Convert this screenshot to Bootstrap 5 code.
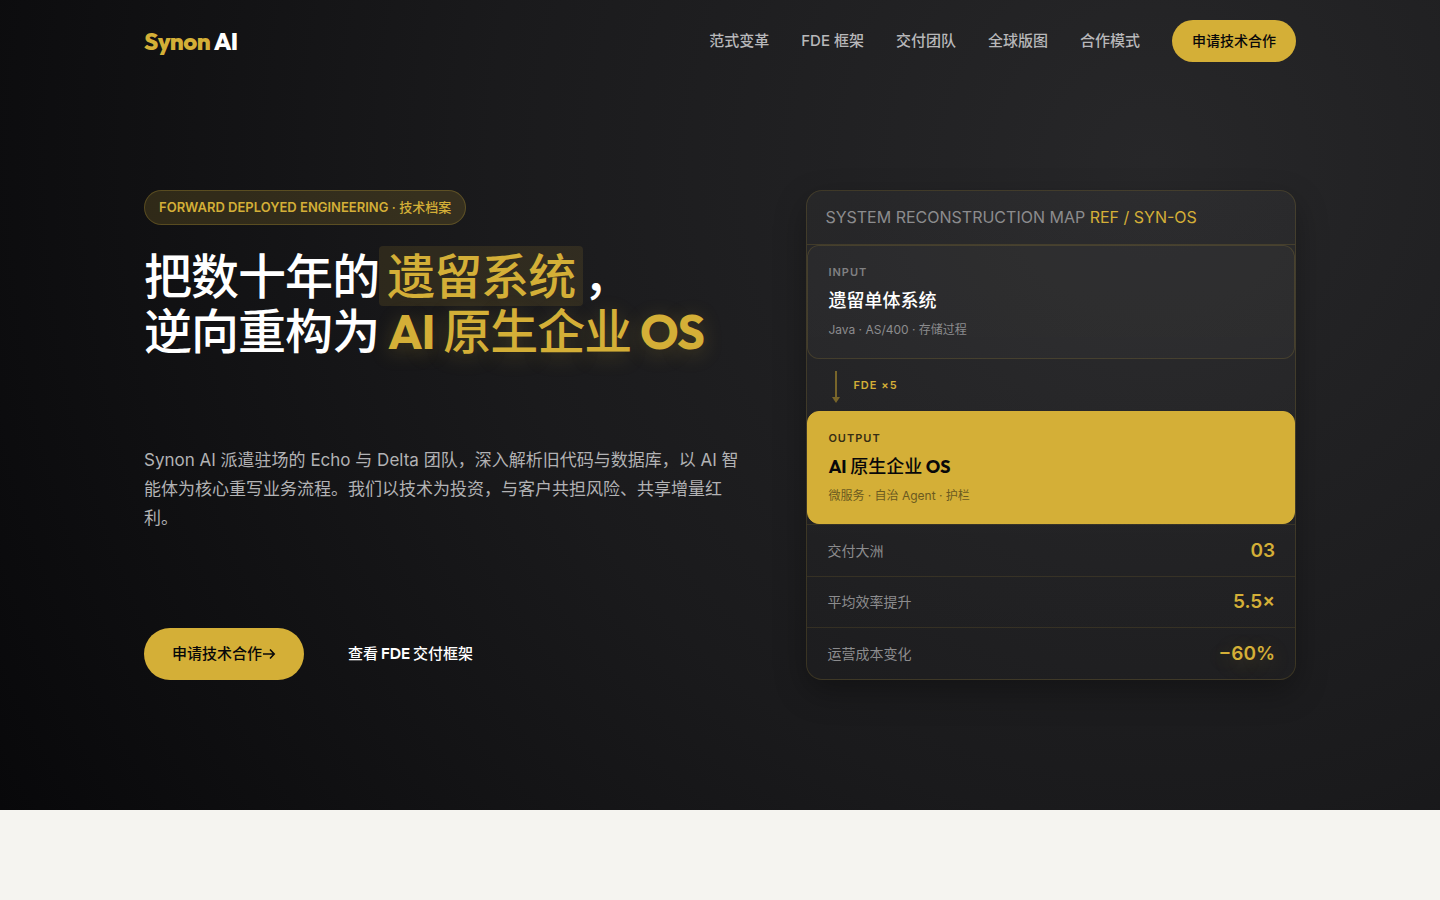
<!DOCTYPE html>
<html lang="zh-CN">
<head>
<meta charset="utf-8">
<meta name="viewport" content="width=device-width, initial-scale=1">
<title>Synon AI</title>
<link rel="stylesheet" href="https://cdn.jsdelivr.net/npm/bootstrap@5.3.0/dist/css/bootstrap.min.css">
<style>
:root {
  --gold: #d4af37;
  --gold-line: rgba(212, 175, 55, .16);
  --display: Outfit, "Noto Sans CJK SC", sans-serif;
}
body { background: #f5f4f0; font-family: Inter, "Noto Sans CJK SC", sans-serif; color: #fff; }
.text-gold { color: var(--gold); }
.page-hero {
  min-height: 90vh;
  background: radial-gradient(circle at 80% 20%, #272729 0%, #1a1a1c 50%, #08080a 100%);
}
.wrap { width: 100%; max-width: 1200px; margin: 0 auto; padding: 0 24px; }
.brand { font: 800 24px/30px var(--display); letter-spacing: -0.02em; color: #fff; text-decoration: none; }
.menu-link { color: #b8b8ba; font-size: 15px; font-weight: 500; line-height: 24px; text-decoration: none; }
.btn-gold { --bs-btn-bg: var(--gold); --bs-btn-color: #08080a; --bs-btn-hover-bg: #e0bd4a; --bs-btn-border-width: 0px; font-family: var(--display); font-weight: 500; }
.btn-apply { font-size: 14px; line-height: 22px; padding: 10px 20px; }
.btn-main { font-size: 15px; line-height: 24px; padding: 14px 28px; }
.btn-ghost { --bs-btn-color: #fff; --bs-btn-hover-color: var(--gold); --bs-btn-border-width: 0px; font: 500 15px/24px var(--display); padding: 14px 28px; }
.btn-ghost b { font-weight: 600; }
.hero-grid { display: grid; grid-template-columns: 1.1fr .9fr; gap: 64px; padding-bottom: 18px; }
.tag-pill { background: rgba(212, 175, 55, .16); border: 1px solid rgba(212, 175, 55, .25); color: var(--gold); font-size: 13px; font-weight: 500; line-height: 21px; padding: 6px 14px; }
.tag-pill b { font-weight: 600; }
.headline { font: 500 48px/55px var(--display); letter-spacing: -0.02em; margin: 24px 0 0; }
.headline b { font-weight: 700; }
.legacy { background: rgba(212, 175, 55, .12); color: var(--gold); border-radius: 4px; padding: 0 8px; }
.glow { color: var(--gold); text-shadow: 0 4px 20px rgba(212, 175, 55, .25); }
.intro { font-size: 17px; line-height: 29px; color: #b2b2b4; padding-bottom: 8px; }
.map { background: linear-gradient(rgba(255, 255, 255, .03), rgba(255, 255, 255, .01)); border: 1px solid var(--gold-line); border-radius: 16px; box-shadow: 0 12px 32px rgba(0, 0, 0, .3); overflow: hidden; }
.map-head { color: #8c8c8e; font-size: 16px; line-height: 26px; padding: 13px 18px 14px; border-bottom: 1px solid var(--gold-line); }
.node { background: rgba(255, 255, 255, .02); border: 1px solid var(--gold-line); border-radius: 12px; padding: 17px 20px 18px; }
.node-label { font-size: 11px; font-weight: 600; line-height: 18px; letter-spacing: 1px; color: #808082; }
.node-title { font: 500 18px/28px var(--display); margin: 6px 0 5px; }
.node-title b { font-weight: 700; }
.node-note { font-size: 12px; line-height: 20px; color: #8c8c8e; }
.node-out { background: var(--gold); border-color: var(--gold); color: #08080a; padding-bottom: 17px; }
.node-out .node-label { color: #352d14; }
.node-out .node-note { color: #6b5a20; }
.step { height: 52px; padding-left: 24px; gap: 12px; color: var(--gold); font-size: 11px; font-weight: 600; letter-spacing: 1px; }
.stat { line-height: 31px; padding: 10px 20px; border-top: 1px solid rgba(212, 175, 55, .12); }
.stat:nth-child(2) { line-height: 30px; }
.stat dt { font-size: 14px; font-weight: 400; color: #8c8c8e; }
.stat dd { font-size: 19px; font-weight: 600; color: var(--gold); }
@media (max-width: 991px) { .hero-grid { grid-template-columns: 1fr; } }
</style>
</head>
<body>
<header class="page-hero d-flex flex-column">
  <nav class="wrap d-flex align-items-center justify-content-between flex-wrap pt-1" aria-label="主导航">
    <a class="brand" href="#"><span class="text-gold">Synon</span> AI</a>
    <div class="d-flex align-items-center flex-wrap py-3 column-gap-4 menu">
      <a class="menu-link" href="#paradigm">范式变革</a>
      <a class="menu-link ms-2" href="#fde">FDE 框架</a>
      <a class="menu-link ms-2" href="#team">交付团队</a>
      <a class="menu-link ms-2" href="#global">全球版图</a>
      <a class="menu-link ms-2" href="#model">合作模式</a>
      <button class="btn btn-gold btn-apply rounded-pill ms-2" type="button">申请技术合作</button>
    </div>
  </nav>
  <main class="wrap flex-grow-1 d-flex flex-column justify-content-center">
    <div class="hero-grid">
      <section class="d-flex flex-column justify-content-between">
        <div>
          <div class="tag-pill rounded-pill d-inline-block"><b>FORWARD DEPLOYED ENGINEERING</b> · 技术档案</div>
          <h1 class="headline">把数十年的<span class="legacy">遗留系统</span>，<br>逆向重构为 <span class="glow"><b>AI</b> 原生企业 <b>OS</b></span></h1>
        </div>
        <p class="intro mb-0">Synon AI 派遣驻场的 Echo 与 Delta 团队，深入解析旧代码与数据库，以 AI 智能体为核心重写业务流程。我们以技术为投资，与客户共担风险、共享增量红利。</p>
        <div class="d-flex gap-3">
          <button class="btn btn-gold btn-main rounded-pill d-flex align-items-center" type="button">申请技术合作<svg width="14" height="12" viewBox="0 0 14 12" fill="none" stroke="currentColor" stroke-width="1.6" aria-hidden="true"><path d="M1 6h11M8 1.5 12.2 6 8 10.5"/></svg></button>
          <button class="btn btn-ghost" type="button">查看 <b>FDE</b> 交付框架</button>
        </div>
      </section>
      <aside class="map">
        <div class="map-head">SYSTEM RECONSTRUCTION MAP <span class="text-gold">REF / SYN-OS</span></div>
        <div class="node">
          <div class="node-label">INPUT</div>
          <h2 class="node-title">遗留单体系统</h2>
          <div class="node-note">Java · AS/400 · 存储过程</div>
        </div>
        <div class="step d-flex align-items-center">
          <svg width="10" height="36" viewBox="0 0 10 36" fill="#78652a" aria-hidden="true"><path d="M4 4h2v26h3L5 36 1 30h3z"/></svg>
          <span>FDE ×5</span>
        </div>
        <div class="node node-out">
          <div class="node-label">OUTPUT</div>
          <h2 class="node-title"><b>AI</b> 原生企业 <b>OS</b></h2>
          <div class="node-note">微服务 · 自治 Agent · 护栏</div>
        </div>
        <dl class="mb-0">
          <div class="stat d-flex justify-content-between"><dt>交付大洲</dt><dd class="mb-0">03</dd></div>
          <div class="stat d-flex justify-content-between"><dt>平均效率提升</dt><dd class="mb-0">5.5×</dd></div>
          <div class="stat d-flex justify-content-between"><dt>运营成本变化</dt><dd class="mb-0 glow">−60%</dd></div>
        </dl>
      </aside>
    </div>
  </main>
</header>
<script src="https://cdn.jsdelivr.net/npm/bootstrap@5.3.0/dist/js/bootstrap.bundle.min.js"></script>
</body>
</html>
